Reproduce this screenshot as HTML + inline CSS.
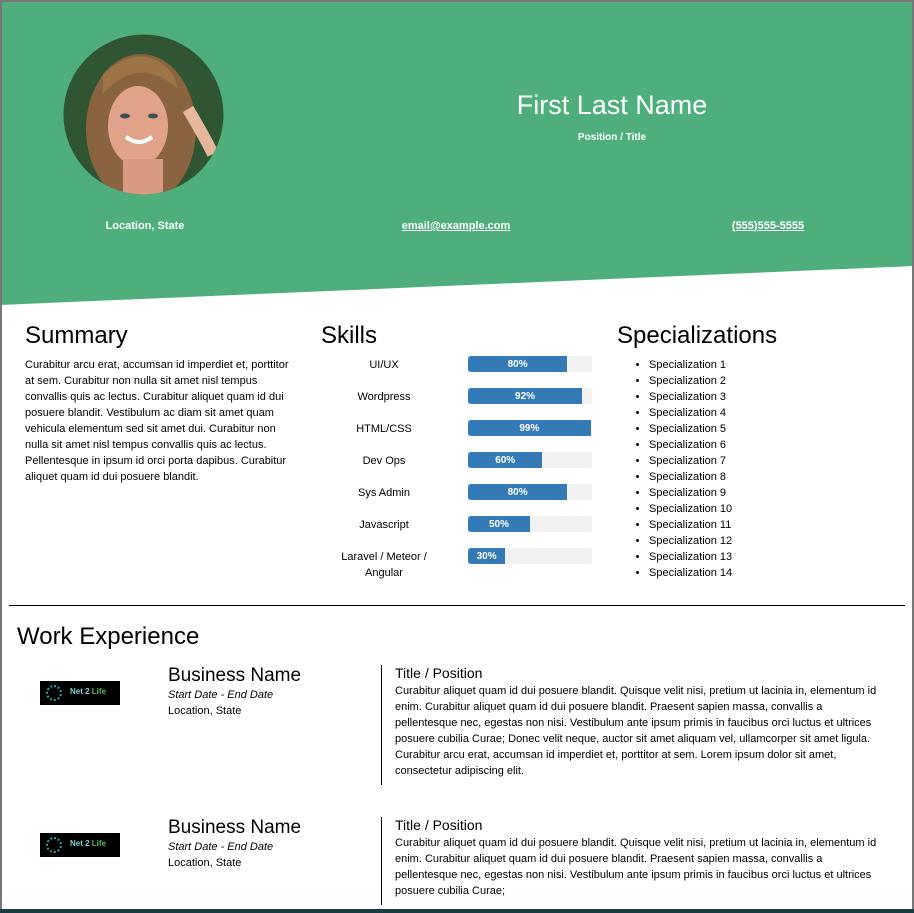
<!DOCTYPE html>
<html><head><meta charset="utf-8"><style>
*{margin:0;padding:0;box-sizing:border-box}
html,body{width:914px;height:913px;overflow:hidden;background:#fff;font-family:"Liberation Sans",Arial,sans-serif;color:#000}
.frame{position:absolute;left:0;top:0;width:914px;height:913px;border:2px solid #777;border-bottom:none;border-right:2px solid #777}
.bottom{position:absolute;left:0;top:909px;width:914px;height:4px;background:#1c3a44}
.abs{position:absolute}
.w{color:#fff;font-weight:bold;font-size:11px}
h2{font-weight:normal;font-size:24px;position:absolute}
.p{font-size:11px;line-height:16px}
.bar{position:absolute;left:468px;width:124px;height:16px;background:#f2f2f2;border-radius:3px}
.bar div{height:16px;background:#337ab7;color:#fff;font-size:10px;font-weight:bold;text-align:center;line-height:17px;border-radius:3px 0 0 3px}
.lab{position:absolute;left:330px;width:108px;text-align:center;font-size:11px;line-height:16px}
ul{position:absolute;left:649px;top:357px;font-size:11px;line-height:16px}
.logo{position:absolute;left:40px;width:80px;height:24px;background:#000}
</style></head><body>
<svg class="abs" style="left:0;top:0" width="914" height="310"><polygon points="0,0 914,0 914,266 0,305" fill="#4faf7c"/></svg>
<svg class="abs" style="left:63px;top:34px" width="161" height="161"><defs><clipPath id="c"><circle cx="80.5" cy="80.5" r="80"/></clipPath></defs><g clip-path="url(#c)"><rect width="161" height="161" fill="#2f5533"/><ellipse cx="78" cy="95" rx="55" ry="75" fill="#8a6440"/><ellipse cx="75" cy="92" rx="30" ry="40" fill="#e0a38a"/><rect x="60" y="125" width="40" height="40" fill="#d89a80"/><path d="M40 60 Q75 20 115 55 L110 40 Q80 5 40 40Z" fill="#9c7448"/><ellipse cx="62" cy="82" rx="5" ry="2.5" fill="#3b4f55"/><ellipse cx="90" cy="82" rx="5" ry="2.5" fill="#3b4f55"/><path d="M63 103 Q76 113 89 103" stroke="#fff" stroke-width="4" fill="none"/><path d="M125 75 Q140 100 150 120" stroke="#e6b79a" stroke-width="12" fill="none"/></g></svg>
<div class="abs" style="left:460px;top:90px;width:304px;text-align:center;color:#fff;font-size:27px">First Last Name</div>
<div class="abs w" style="left:460px;top:132px;width:304px;text-align:center;font-size:10px">Position / Title</div>
<div class="abs w" style="left:60px;top:220px;width:170px;text-align:center">Location, State</div>
<div class="abs w" style="left:371px;top:220px;width:170px;text-align:center;text-decoration:underline">email@example.com</div>
<div class="abs w" style="left:683px;top:220px;width:170px;text-align:center;text-decoration:underline">(555)555-5555</div>

<h2 style="left:25px;top:322px">Summary</h2>
<div class="abs p" style="left:25px;top:357px;width:272px">Curabitur arcu erat, accumsan id imperdiet et, porttitor at sem. Curabitur non nulla sit amet nisl tempus convallis quis ac lectus. Curabitur aliquet quam id dui posuere blandit. Vestibulum ac diam sit amet quam vehicula elementum sed sit amet dui. Curabitur non nulla sit amet nisl tempus convallis quis ac lectus. Pellentesque in ipsum id orci porta dapibus. Curabitur aliquet quam id dui posuere blandit.</div>

<h2 style="left:321px;top:322px">Skills</h2>
<div class="lab" style="top:357px">UI/UX</div><div class="bar" style="top:356px"><div style="width:80%">80%</div></div>
<div class="lab" style="top:389px">Wordpress</div><div class="bar" style="top:388px"><div style="width:92%">92%</div></div>
<div class="lab" style="top:421px">HTML/CSS</div><div class="bar" style="top:420px"><div style="width:99%">99%</div></div>
<div class="lab" style="top:453px">Dev Ops</div><div class="bar" style="top:452px"><div style="width:60%">60%</div></div>
<div class="lab" style="top:485px">Sys Admin</div><div class="bar" style="top:484px"><div style="width:80%">80%</div></div>
<div class="lab" style="top:517px">Javascript</div><div class="bar" style="top:516px"><div style="width:50%">50%</div></div>
<div class="lab" style="top:549px">Laravel / Meteor / Angular</div><div class="bar" style="top:548px"><div style="width:30%">30%</div></div>

<h2 style="left:617px;top:322px">Specializations</h2>
<ul><li>Specialization 1</li><li>Specialization 2</li><li>Specialization 3</li><li>Specialization 4</li><li>Specialization 5</li><li>Specialization 6</li><li>Specialization 7</li><li>Specialization 8</li><li>Specialization 9</li><li>Specialization 10</li><li>Specialization 11</li><li>Specialization 12</li><li>Specialization 13</li><li>Specialization 14</li></ul>

<div class="abs" style="left:9px;top:605px;width:896px;height:1px;background:#000"></div>
<h2 style="left:17px;top:623px">Work Experience</h2>

<div class="logo" style="top:681px"><span class="abs" style="left:30px;top:6px;color:#7fd3d0;font-size:8px;font-weight:bold">Net 2 <span style="color:#5bbf5b">Life</span></span><span class="abs" style="left:6px;top:4px;width:16px;height:16px;border:2px dotted #2aa6a0;border-radius:50%"></span></div>
<div class="abs" style="left:168px;top:665px;font-size:19px">Business Name</div>
<div class="abs" style="left:168px;top:689px;font-size:11px;font-style:italic">Start Date - End Date</div>
<div class="abs" style="left:168px;top:705px;font-size:11px">Location, State</div>
<div class="abs" style="left:381px;top:665px;width:1px;height:120px;background:#000"></div>
<div class="abs" style="left:395px;top:665px;font-size:14px">Title / Position</div>
<div class="abs p" style="left:395px;top:683px;width:490px">Curabitur aliquet quam id dui posuere blandit. Quisque velit nisi, pretium ut lacinia in, elementum id enim. Curabitur aliquet quam id dui posuere blandit. Praesent sapien massa, convallis a pellentesque nec, egestas non nisi. Vestibulum ante ipsum primis in faucibus orci luctus et ultrices posuere cubilia Curae; Donec velit neque, auctor sit amet aliquam vel, ullamcorper sit amet ligula. Curabitur arcu erat, accumsan id imperdiet et, porttitor at sem. Lorem ipsum dolor sit amet, consectetur adipiscing elit.</div>

<div class="logo" style="top:833px"><span class="abs" style="left:30px;top:6px;color:#7fd3d0;font-size:8px;font-weight:bold">Net 2 <span style="color:#5bbf5b">Life</span></span><span class="abs" style="left:6px;top:4px;width:16px;height:16px;border:2px dotted #2aa6a0;border-radius:50%"></span></div>
<div class="abs" style="left:168px;top:817px;font-size:19px">Business Name</div>
<div class="abs" style="left:168px;top:841px;font-size:11px;font-style:italic">Start Date - End Date</div>
<div class="abs" style="left:168px;top:857px;font-size:11px">Location, State</div>
<div class="abs" style="left:381px;top:817px;width:1px;height:88px;background:#000"></div>
<div class="abs" style="left:395px;top:817px;font-size:14px">Title / Position</div>
<div class="abs p" style="left:395px;top:835px;width:490px">Curabitur aliquet quam id dui posuere blandit. Quisque velit nisi, pretium ut lacinia in, elementum id enim. Curabitur aliquet quam id dui posuere blandit. Praesent sapien massa, convallis a pellentesque nec, egestas non nisi. Vestibulum ante ipsum primis in faucibus orci luctus et ultrices posuere cubilia Curae;</div>

<div class="frame"></div>
<div class="bottom"></div>
</body></html>
